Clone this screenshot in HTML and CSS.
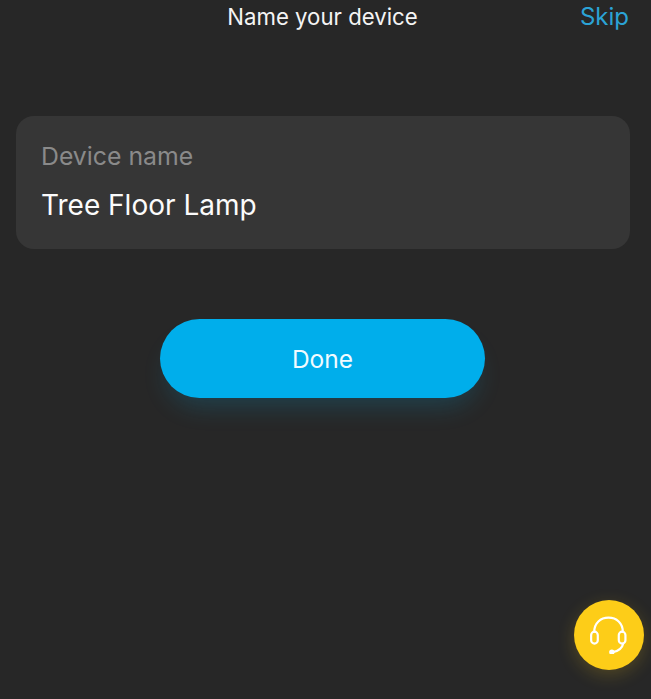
FILE: index.html
```html
<!DOCTYPE html>
<html lang="en">
<head>
<meta charset="utf-8">
<title>Name your device</title>
<link rel="stylesheet" href="styles.css">
</head>
<body>
<main class="screen">
  <header class="topbar">
    <h1 class="title">Name your device</h1>
    <a class="skip">Skip</a>
  </header>
  <section class="field">
    <div class="field-label">Device name</div>
    <div class="field-value">Tree Floor Lamp</div>
  </section>
  <div class="actions">
    <button class="done">Done</button>
  </div>
  <button class="support" aria-label="Support">
    <svg class="support-icon" viewBox="0 0 40 40" fill="none" stroke="#fff" stroke-width="2.300" stroke-linecap="round">
      <path d="M4.500 16.500C4.500 7.500 11 1.800 19.500 1.800S34.500 7.500 34.500 16.500"/>
      <rect x="1.200" y="16.500" width="7" height="12.500" rx="3.500"/>
      <rect x="30.300" y="16.500" width="7" height="12.500" rx="3.500"/>
      <path d="M35 29C34 33.500 30 37 24 38"/>
      <circle cx="23" cy="38" r="1.700" fill="#fff"/>
    </svg>
  </button>
</main>
</body>
</html>
```

FILE: styles.css
```css
* { box-sizing: border-box; }
html, body { margin: 0; height: 100%; }
body { background: #272727; font-family: Inter, "Noto Sans", sans-serif; overflow: hidden; }
.screen { position: relative; width: 651px; height: 699px; padding: 0 21px 0 16px; }
.topbar { position: relative; height: 33px; display: flex; align-items: center; justify-content: flex-end; margin-right: -21px; padding-right: 22px; margin-left: -16px; }
.title { position: absolute; left: 0; right: 6px; margin: 0; text-align: center; font-size: 22.200px; font-weight: 400; color: #f4f4f4; }
.skip { font-size: 24px; color: #2ba3d6; }
.field { width: 614px; height: 133px; margin-top: 83px; padding: 25px 25px 0; background: #363636; border-radius: 18px; }
.field-label { font-size: 24.800px; line-height: 30px; color: #8a8a8a; }
.field-value { margin-top: 17px; font-size: 28px; line-height: 34px; color: #fbfbfb; }
.actions { display: flex; margin-top: 70px; padding-left: 144px; }
.done { width: 325px; height: 79px; border: 0; border-radius: 40px; background: #00aeeb; color: #f2fbff; font: 400 24.500px Inter, "Noto Sans", sans-serif; box-shadow: 0 16px 26px -8px rgba(0,174,235,.2); }
.support { position: absolute; left: 574px; top: 600px; width: 70px; height: 70px; padding: 0; border: 0; border-radius: 50%; background: #fdcd18; display: flex; align-items: center; justify-content: center; box-shadow: 0 5px 18px rgba(253,205,24,.2); }
.support-icon { width: 38px; height: 38px; display: block; }
```
